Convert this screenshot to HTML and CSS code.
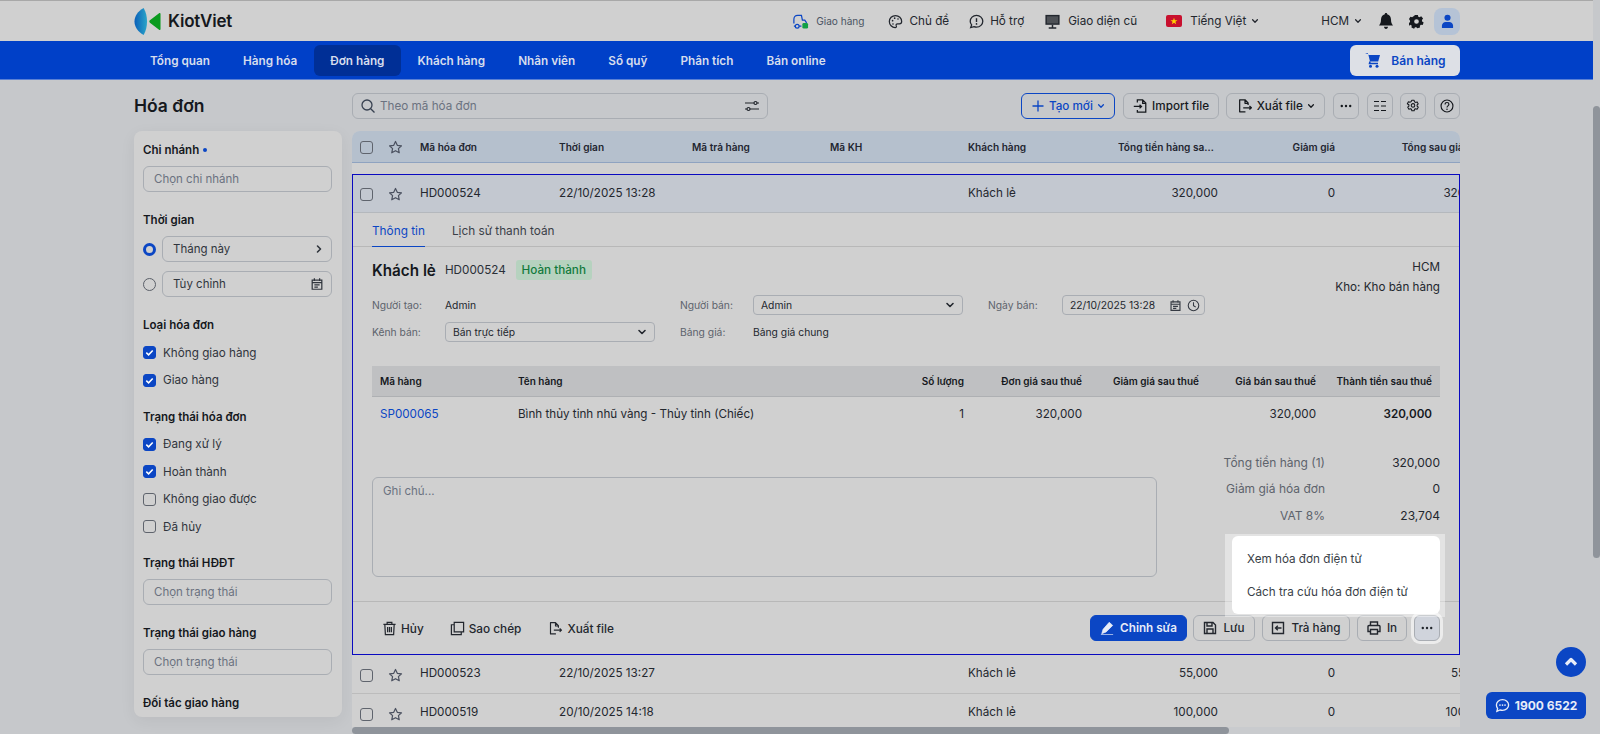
FILE: index.html
```html
<!DOCTYPE html>
<html lang="vi">
<head>
<meta charset="utf-8">
<title>KiotViet - Hóa đơn</title>
<link rel="stylesheet" href="styles.css">
</head>
<body>
<svg class="sprite" aria-hidden="true">
  <symbol id="star" viewBox="0 0 16 16"><path d="M8 1.600l1.900 4.100 4.500.5-3.300 3 .9 4.400L8 11.400l-4 2.200.9-4.400-3.300-3 4.500-.5z" fill="none" stroke="currentColor" stroke-width="1.300" stroke-linejoin="round"/></symbol>
  <symbol id="cal" viewBox="0 0 16 16"><path d="M2.500 3.500h11v10.500h-11zM2.500 6.500h11M5 1.500v3M11 1.500v3M5 9h6M5 11.500h4" fill="none" stroke="currentColor" stroke-width="1.400"/></symbol>
  <symbol id="chev" viewBox="0 0 10 10"><path d="M2 3.500l3 3 3-3" fill="none" stroke="currentColor" stroke-width="1.600" stroke-linecap="round" stroke-linejoin="round"/></symbol>
  <symbol id="export" viewBox="0 0 18 18"><path d="M9.500 15.500H3V2h6l3.500 3.500V8M9 2v4h3.500M7 11h9M14 9l2.200 2-2.200 2" fill="none" stroke="currentColor" stroke-width="1.400" stroke-linejoin="round"/></symbol>
  <symbol id="dots" viewBox="0 0 14 14"><circle cx="2.800" cy="7" r="1.200" fill="currentColor"/><circle cx="7" cy="7" r="1.200" fill="currentColor"/><circle cx="11.200" cy="7" r="1.200" fill="currentColor"/></symbol>
</svg>

<div class="app">
  <div class="page">
    <header class="topbar">
      <div class="brand">
        <svg class="logo" viewBox="0 0 27 28">
          <defs><linearGradient id="lg" x1="0" x2="1"><stop offset="0" stop-color="#0a5fb8"/><stop offset="1" stop-color="#2aa5c9"/></linearGradient></defs>
          <path d="M9.500 0C3.500 3.500 0 8.500 0 14s3.500 10.500 9.500 14C12 23.500 13 19 13 14S12 4.500 9.500 0z" fill="url(#lg)"/>
          <path d="M25.500 5.500c.7-.5 1.500 0 1.500.8v15.400c0 .8-.8 1.300-1.500.8L16 15.200c-.8-.6-.8-1.800 0-2.400z" fill="#0a9a1e"/>
        </svg>
        <span class="brand-name">KiotViet</span>
      </div>
      <div class="top-links">
        <a class="tl tl-ship">
          <svg class="i17" viewBox="0 0 18 18"><path d="M2 11V6.500C2 4 3.500 2.500 6 2.500h4l1 5h2.500l2 3M2 14h1.500M7.500 14H10" fill="none" stroke="#0b46c4" stroke-width="1.300"/><circle cx="5.500" cy="14" r="2" fill="none" stroke="#0b46c4" stroke-width="1.300"/><rect x="11" y="10.500" width="6" height="6" rx="1.500" fill="#11a044"/></svg>
          <span>Giao hàng</span>
        </a>
        <a class="tl tl-theme">
          <svg class="i15" viewBox="0 0 18 18"><path d="M9 1.800C4.800 1.800 1.600 5 1.600 9s3.200 7.200 7 7.200c1.400 0 1.800-1 1.300-2-.6-1.300.1-2.500 1.600-2.500h2.200c1.600 0 2.700-1 2.700-2.800 0-4-3.300-7.100-7.400-7.100z" fill="none" stroke="currentColor" stroke-width="1.500"/><circle cx="5.500" cy="8" r="1" fill="currentColor"/><circle cx="8" cy="5" r="1" fill="currentColor"/><circle cx="12" cy="6" r="1" fill="currentColor"/><circle cx="6" cy="12" r="1" fill="currentColor"/></svg>
          <span>Chủ đề</span>
        </a>
        <a class="tl tl-help">
          <svg class="i15" viewBox="0 0 16 16"><path d="M8 1.500c3.800 0 6.700 2.800 6.700 6.200S11.800 14 8 14c-1 0-1.900-.2-2.700-.5L1.800 14.500l1-2.900C1.900 10.600 1.300 9.200 1.300 7.700 1.300 4.300 4.200 1.500 8 1.500z" fill="none" stroke="currentColor" stroke-width="1.400"/><path d="M8 4.500v4" stroke="currentColor" stroke-width="1.500"/><circle cx="8" cy="10.600" r=".9" fill="currentColor"/></svg>
          <span>Hỗ trợ</span>
        </a>
        <a class="tl tl-old">
          <svg class="i17" viewBox="0 0 18 18"><path d="M1.500 2h15v10.500h-15z" fill="currentColor"/><path d="M9 12.500v3M5 16h8" stroke="currentColor" stroke-width="1.600"/><path d="M3 3.500h12v7.500H3z" fill="#d0d0d0" opacity=".25"/></svg>
          <span>Giao diện cũ</span>
        </a>
        <a class="tl tl-lang">
          <svg class="flag" viewBox="0 0 16 12"><rect width="16" height="12" rx="2" fill="#c8102e"/><path d="M8 2.700l.9 2.500h2.600L9.400 6.800l.8 2.500L8 7.800 5.800 9.300l.8-2.500-2.100-1.600h2.600z" fill="#ffd200"/></svg>
          <span>Tiếng Việt</span>
          <svg class="i8 lang-chev" viewBox="0 0 10 10"><use href="#chev"/></svg>
        </a>
        <a class="tl tl-branch">
          <span>HCM</span>
          <svg class="i8" viewBox="0 0 10 10"><use href="#chev"/></svg>
        </a>
        <svg class="bell" viewBox="0 0 16 18"><path d="M8 1c.8 0 1.200.5 1.200 1.200C11.500 2.800 13 4.800 13 7.500c0 3 .7 4.500 2 6H1c1.300-1.500 2-3 2-6 0-2.700 1.500-4.700 3.800-5.300C6.800 1.500 7.200 1 8 1zM6 14.800h4c0 1.200-.9 2.200-2 2.200s-2-1-2-2.200z" fill="#15181d"/></svg>
        <svg class="cog" viewBox="0 0 16 16"><path d="M6.500 1h3l.4 1.900 1.300.6L13 2.500l2 2.300-1.200 1.500.2 1.700 1.600 1-1 2.800-1.900-.3-1.100 1.100.1 1.900-2.900.6L7.900 14l-1.500 0-1 1.600-2.800-1.100.3-1.900-1.100-1.100L.4 12.500l-.9-2.800 1.600-1 0-1.500L0 5.300 1.500 2.800l1.800.6 1.200-.8zM8 5.500A2.500 2.500 0 1 0 8 10.500 2.500 2.500 0 0 0 8 5.500z" fill="#15181d" fill-rule="evenodd"/></svg>
        <span class="avatar"><svg viewBox="0 0 14 16"><circle cx="7" cy="4" r="3.300" fill="#0b46c4"/><path d="M1 15v-2.500C1 10 3 8.500 5 8.500h4c2 0 4 1.500 4 4V15z" fill="#0b46c4"/></svg></span>
      </div>
    </header>

    <nav class="mainnav">
      <a class="ni">Tổng quan</a>
      <a class="ni">Hàng hóa</a>
      <a class="ni ni-active">Đơn hàng</a>
      <a class="ni">Khách hàng</a>
      <a class="ni">Nhân viên</a>
      <a class="ni">Sổ quỹ</a>
      <a class="ni">Phân tích</a>
      <a class="ni">Bán online</a>
      <button class="sell">
        <svg class="i18" viewBox="0 0 18 18"><path d="M1 2h2.800l.5 2H16l-1.800 6.500H6L4.200 3" fill="#0b46c4"/><path d="M6 10.500l-.5 2H14" fill="none" stroke="#0b46c4" stroke-width="1.500"/><circle cx="6.500" cy="15.300" r="1.500" fill="#0b46c4"/><circle cx="13" cy="15.300" r="1.500" fill="#0b46c4"/></svg>
        Bán hàng
      </button>
    </nav>

    <div class="content">
      <aside class="left">
        <h1 class="title">Hóa đơn</h1>
        <div class="sidebar">
          <div class="side-inner">
            <h3 class="lab first">Chi nhánh <i class="dot"></i></h3>
            <div class="field ph">Chọn chi nhánh</div>

            <h3 class="lab">Thời gian</h3>
            <div class="radio-row">
              <span class="radio on"></span>
              <div class="field val"><span>Tháng này</span><svg class="i10 rot" viewBox="0 0 10 10"><use href="#chev"/></svg></div>
            </div>
            <div class="radio-row">
              <span class="radio"></span>
              <div class="field val"><span>Tùy chỉnh</span><svg class="i14" viewBox="0 0 16 16"><use href="#cal"/></svg></div>
            </div>

            <h3 class="lab">Loại hóa đơn</h3>
            <div class="checks">
              <label class="ck"><span class="box on"><svg viewBox="0 0 12 12"><path d="M2.500 6.200l2.500 2.300 4.500-4.700" fill="none" stroke="#fff" stroke-width="1.700"/></svg></span>Không giao hàng</label>
              <label class="ck"><span class="box on"><svg viewBox="0 0 12 12"><path d="M2.500 6.200l2.500 2.300 4.500-4.700" fill="none" stroke="#fff" stroke-width="1.700"/></svg></span>Giao hàng</label>
            </div>

            <h3 class="lab tight">Trạng thái hóa đơn</h3>
            <div class="checks">
              <label class="ck"><span class="box on"><svg viewBox="0 0 12 12"><path d="M2.500 6.200l2.500 2.300 4.500-4.700" fill="none" stroke="#fff" stroke-width="1.700"/></svg></span>Đang xử lý</label>
              <label class="ck"><span class="box on"><svg viewBox="0 0 12 12"><path d="M2.500 6.200l2.500 2.300 4.500-4.700" fill="none" stroke="#fff" stroke-width="1.700"/></svg></span>Hoàn thành</label>
              <label class="ck"><span class="box"></span>Không giao được</label>
              <label class="ck"><span class="box"></span>Đã hủy</label>
            </div>

            <h3 class="lab tight">Trạng thái HĐĐT</h3>
            <div class="field ph">Chọn trạng thái</div>

            <h3 class="lab">Trạng thái giao hàng</h3>
            <div class="field ph">Chọn trạng thái</div>

            <h3 class="lab">Đối tác giao hàng</h3>
          </div>
        </div>
      </aside>

      <main class="right">
        <div class="toolbar">
          <div class="search">
            <svg class="i16" viewBox="0 0 16 16"><circle cx="7" cy="7" r="5" fill="none" stroke="#374151" stroke-width="1.300"/><path d="M10.700 10.700L14.500 14.500" stroke="#374151" stroke-width="1.300"/></svg>
            <span class="search-ph">Theo mã hóa đơn</span>
            <svg class="i16 filter" viewBox="0 0 16 16"><path d="M1 5h9M13 5h2M1 11h2M6 11h9" stroke="#20242b" stroke-width="1.200"/><circle cx="11.500" cy="5" r="1.500" fill="none" stroke="#20242b" stroke-width="1.200"/><circle cx="4.500" cy="11" r="1.500" fill="none" stroke="#20242b" stroke-width="1.200"/></svg>
          </div>
          <div class="tools">
            <button class="btn btn-new"><svg class="i14" viewBox="0 0 14 14"><path d="M7 1.500v11M1.500 7h11" stroke="currentColor" stroke-width="1.300"/></svg>Tạo mới<svg class="i8" viewBox="0 0 10 10"><use href="#chev"/></svg></button>
            <button class="btn btn-imp"><svg class="i16" viewBox="0 0 18 18"><path d="M6 5V2h6l3.500 3.500V16H6v-2.500M12 2v4h3.500M2 9.500h8.500M8.500 7.500l2.200 2-2.200 2" fill="none" stroke="currentColor" stroke-width="1.400"/></svg>Import file</button>
            <button class="btn btn-exp"><svg class="i16" viewBox="0 0 18 18"><use href="#export"/></svg>Xuất file<svg class="i8" viewBox="0 0 10 10"><use href="#chev"/></svg></button>
            <button class="btn sq"><svg class="i14" viewBox="0 0 14 14"><use href="#dots"/></svg></button>
            <button class="btn sq"><svg class="i14" viewBox="0 0 14 14"><path d="M1 2.500h5M8 2.500h5M1 7h5M8 7h5M1 11.500h5M8 11.500h5" stroke="currentColor" stroke-width="1.200"/></svg></button>
            <button class="btn sq"><svg class="i14" viewBox="0 0 16 16"><path d="M6.700 1.500h2.600l.4 1.700 1.300.7 1.700-.6 1.300 2.300-1.300 1.200v1.400l1.300 1.200-1.300 2.300-1.700-.6-1.300.7-.4 1.700H6.700l-.4-1.700-1.300-.7-1.700.6-1.300-2.300 1.300-1.200V6.600L1.500 5.400l1.300-2.300 1.700.6 1.300-.7z" fill="none" stroke="currentColor" stroke-width="1.200" stroke-linejoin="round"/><circle cx="8" cy="7.300" r="2" fill="none" stroke="currentColor" stroke-width="1.200"/></svg></button>
            <button class="btn sq"><svg class="i14" viewBox="0 0 16 16"><circle cx="8" cy="8" r="6.800" fill="none" stroke="currentColor" stroke-width="1.300"/><path d="M5.800 6.200C5.800 4.900 6.800 4 8 4s2.200.9 2.200 2.100c0 1.700-2.200 1.800-2.200 3.500" fill="none" stroke="currentColor" stroke-width="1.300"/><circle cx="8" cy="11.700" r=".9" fill="currentColor"/></svg></button>
          </div>
        </div>

        <div class="table-wrap">
          <div class="thead grid-main">
            <div class="cell-ctl"><span class="box"></span><svg class="star" viewBox="0 0 16 16"><use href="#star"/></svg></div>
            <div>Mã hóa đơn</div><div>Thời gian</div><div>Mã trả hàng</div><div>Mã KH</div><div>Khách hàng</div>
            <div class="r ell">Tổng tiền hàng sau thuế</div><div class="r">Giảm giá</div><div class="r">Tổng sau giảm giá</div>
          </div>
          <div class="spacer"></div>

          <section class="open">
            <div class="row row-open grid-open">
              <div class="cell-ctl"><span class="box"></span><svg class="star" viewBox="0 0 16 16"><use href="#star"/></svg></div>
              <div>HD000524</div><div>22/10/2025 13:28</div><div></div><div></div><div>Khách lẻ</div>
              <div class="r">320,000</div><div class="r">0</div><div class="r">320,000</div>
            </div>
            <div class="tabs">
              <a class="tab tab-on">Thông tin</a>
              <a class="tab">Lịch sử thanh toán</a>
            </div>
            <div class="detail">
              <div class="info">
                <div class="info-main">
                  <div class="headline">
                    <strong class="cust">Khách lẻ</strong>
                    <span class="code">HD000524</span>
                    <span class="badge">Hoàn thành</span>
                  </div>
                  <div class="meta">
                    <span class="k">Người tạo:</span><span class="v">Admin</span>
                    <span class="k">Người bán:</span><div class="sel"><span>Admin</span><svg class="i10" viewBox="0 0 10 10"><use href="#chev"/></svg></div>
                    <span class="k">Ngày bán:</span>
                    <div class="sel date"><span>22/10/2025 13:28</span><span class="date-ic"><svg class="i13" viewBox="0 0 16 16"><use href="#cal"/></svg><svg class="i13" viewBox="0 0 16 16"><circle cx="8" cy="8" r="6.500" fill="none" stroke="currentColor" stroke-width="1.300"/><path d="M8 4v4.300l2.700 1.500" fill="none" stroke="currentColor" stroke-width="1.300"/></svg></span></div>
                    <span class="k">Kênh bán:</span><div class="sel"><span>Bán trực tiếp</span><svg class="i10" viewBox="0 0 10 10"><use href="#chev"/></svg></div>
                    <span class="k">Bảng giá:</span><span class="v">Bảng giá chung</span>
                  </div>
                </div>
                <div class="info-side">
                  <div>HCM</div>
                  <div>Kho: Kho bán hàng</div>
                </div>
              </div>

              <div class="pt-head grid-pt">
                <div>Mã hàng</div><div>Tên hàng</div><div class="r">Số lượng</div><div class="r">Đơn giá sau thuế</div><div class="r">Giảm giá sau thuế</div><div class="r">Giá bán sau thuế</div><div class="r">Thành tiền sau thuế</div>
              </div>
              <div class="pt-row grid-pt">
                <div class="link">SP000065</div><div class="pname">Bình thủy tinh nhũ vàng - Thủy tinh (Chiếc)</div><div class="r">1</div><div class="r">320,000</div><div class="r"></div><div class="r">320,000</div><div class="r total">320,000</div>
              </div>

              <div class="bottom">
                <div class="note">Ghi chú...</div>
                <div class="sums">
                  <span class="sk">Tổng tiền hàng (1)</span><span class="sv">320,000</span>
                  <span class="sk">Giảm giá hóa đơn</span><span class="sv">0</span>
                  <span class="sk">VAT 8%</span><span class="sv">23,704</span>
                </div>
              </div>
            </div>
            <div class="foot">
              <div class="foot-left">
                <a class="fa fa-del"><svg class="i16" viewBox="0 0 16 16"><path d="M1.500 3.500h13M5.500 3.500V1.500h5v2M3 3.500l.6 11h8.800l.6-11M6 6.500v5.500M8 6.500v5.500M10 6.500v5.500" fill="none" stroke="currentColor" stroke-width="1.300"/></svg>Hủy</a>
                <a class="fa fa-copy"><svg class="i16" viewBox="0 0 16 16"><path d="M4.500 1.500h10v10h-10zM4.500 4H1.500v10.500H12v-3" fill="none" stroke="currentColor" stroke-width="1.300"/></svg>Sao chép</a>
                <a class="fa fa-exp"><svg class="i16" viewBox="0 0 18 18"><use href="#export"/></svg>Xuất file</a>
              </div>
              <div class="foot-right">
                <button class="btn2 primary"><svg class="i14" viewBox="0 0 16 16"><path d="M10.500 1.500l4 3.500-7.500 7.500-5 2 1.500-5zM1 15.500h14" fill="#e8edf8" stroke="#e8edf8" stroke-width=".8"/></svg>Chỉnh sửa</button>
                <button class="btn2 b-save"><svg class="i14" viewBox="0 0 14 14"><path d="M1.500 1.500h8.500l2.500 2.500v8.500h-11zM4 1.500v3.500h5V1.500M4 12.500V8h6v4.500" fill="none" stroke="currentColor" stroke-width="1.400"/></svg>Lưu</button>
                <button class="btn2 b-ret"><svg class="i14" viewBox="0 0 14 14"><path d="M1.500 1.500h11v11h-11zM10.500 7H4.500M6.800 4.700L4.500 7l2.300 2.300" fill="none" stroke="currentColor" stroke-width="1.400"/></svg>Trả hàng</button>
                <button class="btn2 b-print"><svg class="i14" viewBox="0 0 14 14"><path d="M3.500 4.500V1h7v3.500M3.500 10.500H1V5.500c0-.6.400-1 1-1h10c.6 0 1 .4 1 1v5h-2.500M3.500 8.500h7V13h-7z" fill="none" stroke="currentColor" stroke-width="1.400"/></svg>In</button>
                <button class="btn2 b-more"><svg class="i14" viewBox="0 0 14 14"><use href="#dots"/></svg></button>
              </div>
            </div>
            <div class="menu-halo">
              <div class="menu">
                <a class="mi">Xem hóa đơn điện tử</a>
                <a class="mi">Cách tra cứu hóa đơn điện tử</a>
              </div>
            </div>
          </section>

          <div class="row grid-main">
            <div class="cell-ctl"><span class="box"></span><svg class="star" viewBox="0 0 16 16"><use href="#star"/></svg></div>
            <div>HD000523</div><div>22/10/2025 13:27</div><div></div><div></div><div>Khách lẻ</div>
            <div class="r">55,000</div><div class="r">0</div><div class="r">55,000</div>
          </div>
          <div class="row grid-main">
            <div class="cell-ctl"><span class="box"></span><svg class="star" viewBox="0 0 16 16"><use href="#star"/></svg></div>
            <div>HD000519</div><div>20/10/2025 14:18</div><div></div><div></div><div>Khách lẻ</div>
            <div class="r">100,000</div><div class="r">0</div><div class="r">100,000</div>
          </div>
        </div>
        <div class="hscroll"><div class="hthumb"></div></div>
      </main>
    </div>
  </div>
  <div class="vscroll"><div class="vthumb"></div></div>

  <button class="to-top"><svg viewBox="0 0 14 14"><path d="M2 9.500L7 4.500l5 5" fill="none" stroke="#e8edf8" stroke-width="3.200" stroke-linejoin="round"/></svg></button>
  <button class="hotline"><svg viewBox="0 0 16 16"><path d="M8 1.800c3.700 0 6.500 2.500 6.500 5.700S11.700 13.200 8 13.200c-.9 0-1.800-.2-2.600-.4L2 14.200l.8-3C2 10.200 1.500 8.900 1.500 7.500 1.500 4.300 4.300 1.800 8 1.800z" fill="none" stroke="#e8edf8" stroke-width="1.400"/><circle cx="5.300" cy="7.500" r=".9" fill="#e8edf8"/><circle cx="8" cy="7.500" r=".9" fill="#e8edf8"/><circle cx="10.700" cy="7.500" r=".9" fill="#e8edf8"/></svg>1900 6522</button>
</div>
</body>
</html>
```

FILE: styles.css
```css
* { box-sizing: border-box; }
html, body { margin: 0; padding: 0; height: 100%; overflow: hidden; }
body { font-family: Inter, "Noto Sans", sans-serif; font-size: 11.700px; color: #23272e; background: #c6c8cb; }
a { color: inherit; text-decoration: none; }
button { font-family: inherit; cursor: pointer; }
.sprite { display: none; }
svg { display: block; flex: none; }
.i8 { width: 8px; height: 8px; }
.i10 { width: 10px; height: 10px; }
.i13 { width: 13px; height: 13px; }
.i14 { width: 14px; height: 14px; }
.i15 { width: 15px; height: 15px; }
.i16 { width: 16px; height: 16px; }
.i17 { width: 17px; height: 17px; }
.i18 { width: 18px; height: 18px; }

.app { position: relative; display: flex; width: 1600px; height: 734px; overflow: hidden; }
.page { width: 1593px; height: 734px; display: flex; flex-direction: column; }
.vscroll { width: 7px; height: 734px; background: #c6c8cb; padding-top: 106px; }
.vthumb { height: 452px; background: #8f949b; border-radius: 4px; }

/* top bar */
.topbar { height: 41px; flex: none; border-top: 1px solid #a8a8a8; background: #d0d0d0; display: flex; align-items: center; padding: 0 133px 0 134px; }
.brand { display: flex; align-items: center; gap: 7px; }
.logo { width: 27px; height: 27px; }
.brand-name { font-size: 17px; font-weight: 600; color: #15181d; letter-spacing: -.2px; }
.top-links { margin-left: auto; display: flex; align-items: center; }
.tl { display: flex; align-items: center; font-size: 11.700px; color: #23272e; gap: 7px; }
.tl-ship { font-size: 10.100px; color: #4b5563; gap: 7px; }
.tl-theme { margin-left: 23px; }
.tl-help { margin-left: 20px; gap: 6px; }
.tl-old { margin-left: 20px; }
.tl-lang { margin-left: 29px; gap: 8px; }
.lang-chev { margin-left: -3px; }
.flag { width: 16px; height: 12px; }
.tl-branch { margin-left: 62px; gap: 5px; }
.bell { width: 16px; height: 18px; margin-left: 16px; }
.cog { width: 15px; height: 15px; margin-left: 15px; }
.avatar { width: 26px; height: 27px; margin-left: 10px; border-radius: 8px; background: #b5c3d6; display: flex; align-items: center; justify-content: center; }
.avatar svg { width: 13px; height: 15px; }

/* main nav */
.mainnav { height: 39px; flex: none; background: #0040c8; display: flex; align-items: center; padding: 0 133px 0 133.500px; border-bottom: 1px solid #5a80d4; }
.ni { height: 31px; padding: 1px 16.500px 0; display: flex; align-items: center; font-size: 11.750px; font-weight: 600; color: #d6dded; border-radius: 6px; }
.ni-active { background: #002f96; }
.sell { margin-left: auto; width: 110px; height: 31px; border: 0; border-radius: 6px; background: #dde0e6; color: #0b46c4; font-size: 12px; font-weight: 600; display: flex; align-items: center; justify-content: center; gap: 9px; }

/* layout */
.content { flex: 1; display: flex; gap: 10px; padding: 13px 133px 0 134px; min-height: 0; }
.left { width: 208px; flex: none; }
.right { width: 1108px; flex: none; display: flex; flex-direction: column; height: 641px; }
.title { margin: 0; height: 38px; font-size: 17.500px; line-height: 26px; font-weight: 600; color: #15181d; }

/* sidebar */
.sidebar { height: 586px; border-radius: 8px; background: #d0d0d0; box-shadow: 0 4px 16px rgba(0,0,0,.06); }
.side-inner { height: 580px; overflow: hidden; padding: 0 10px 0 9px; }
.lab { margin: 19px 0 0; padding-top: 1px; font-size: 11.500px; line-height: 16px; font-weight: 600; color: #15181d; display: flex; align-items: center; gap: 4px; }
.lab.first { margin-top: 10px; }
.lab.tight { margin-top: 13.500px; }
.dot { width: 4px; height: 4px; border-radius: 50%; background: #0b46c4; display: block; }
.field { height: 26px; margin-top: 8px; border: 1px solid #a9adb3; border-radius: 6px; padding: 0 10px; display: flex; align-items: center; font-size: 11.500px; }
.ph { color: #6b7280; }
.radio-row { display: flex; align-items: center; gap: 6px; margin-top: 8px; }
.radio-row + .radio-row { margin-top: 9px; }
.radio-row .field { margin-top: 0; flex: 1; justify-content: space-between; padding-right: 7px; color: #30353d; }
.radio { width: 13px; height: 13px; border-radius: 50%; border: 1px solid #5a5f68; flex: none; }
.radio.on { border: 3.500px solid #0b46c4; }
.rot { transform: rotate(-90deg); }
.checks { margin-top: 6px; }
.ck { height: 27.500px; display: flex; align-items: center; gap: 7px; font-size: 11.700px; color: #30353d; }
.box { width: 13px; height: 13px; border: 1px solid #5f646d; border-radius: 3px; flex: none; display: block; }
.box.on { background: #0b46c4; border-color: #0b46c4; }
.box svg { width: 11px; height: 11px; }

/* toolbar */
.toolbar { height: 26px; flex: none; display: flex; margin-bottom: 12px; }
.search { width: 416px; height: 26px; border: 1px solid #a9adb3; border-radius: 6px; display: flex; align-items: center; padding: 0 7px; gap: 4px; font-size: 11.700px; }
.search-ph { color: #6b7280; }
.filter { margin-left: auto; }
.tools { margin-left: auto; display: flex; gap: 7.700px; }
.btn { height: 26px; border: 1px solid #a9adb3; border-radius: 6px; background: transparent; color: #15181d; display: flex; align-items: center; justify-content: center; gap: 4px; font-size: 11.700px; font-weight: 500; padding: 0; }
.btn-new { width: 94px; border-color: #0b46c4; color: #0b46c4; }
.btn-imp { width: 96px; }
.btn-exp { width: 99px; }
.sq { width: 26px; }

/* table */
.table-wrap { flex: 1; min-height: 0; overflow: hidden; background: #d0d0d0; border-radius: 8px 8px 0 0; }
.grid-main { display: grid; grid-template-columns: 68px 139px 133px 138px 138px 150px 100px 117px 155px; align-items: center; width: 1138px; }
.grid-open { display: grid; grid-template-columns: 67px 139px 133px 138px 138px 150px 100px 117px 155px; align-items: center; width: 1137px; }
.thead { height: 32px; background: #b5c0cd; border-bottom: 1px solid #8fa3c0; font-size: 10.100px; font-weight: 600; color: #1f2530; padding-top: 1px; }
.thead .ell { white-space: nowrap; overflow: hidden; text-overflow: ellipsis; padding-right: 4px; }
.thead .r:last-child { white-space: nowrap; }
.spacer { height: 11px; }
.r { text-align: right; }
.cell-ctl { display: flex; align-items: center; gap: 15px; padding-left: 8px; }
.star { width: 15px; height: 15px; color: #4b5160; }
.row { height: 39px; padding-bottom: 2px; border-bottom: 1px solid #bcbcbc; font-size: 11.700px; color: #23272e; }
.row .cell-ctl { padding-top: 4px; }
.thead .cell-ctl { padding-top: 0; }
.open { position: relative; height: 481px; border: 1px solid #0a0ac0; overflow: hidden; }
.row-open { height: 38px; background: #c3c8d0; border-bottom: 1px solid #b4b8bd; }
.row-open .cell-ctl { padding-left: 7px; }
.tabs { height: 34px; display: flex; gap: 27px; padding: 0 19px; border-bottom: 1px solid #b8b8b8; }
.tab { height: 33px; line-height: 37px; font-size: 11.800px; color: #3a3f48; }
.tab-on { color: #0b46c4; border-bottom: 1px solid #0b46c4; height: 34px; }
.detail { padding: 11px 19px 0; }
.info { display: flex; justify-content: space-between; }
.info-main { padding-top: 2px; }
.info-side { text-align: right; font-size: 11.650px; line-height: 19.500px; color: #23272e; }
.headline { height: 20px; display: flex; align-items: center; }
.cust { font-size: 15.250px; font-weight: 600; color: #15181d; }
.code { margin-left: 9px; font-size: 11.700px; color: #2a2f37; }
.badge { margin-left: 10px; height: 20px; width: 76px; border-radius: 3px; background: #b6d2bf; color: #127a3c; font-size: 11.700px; font-weight: 500; display: flex; align-items: center; justify-content: center; }
.meta { display: grid; grid-template-columns: 73px 235px 73px 235px 74px 143px; grid-auto-rows: 20px; row-gap: 7px; margin-top: 15px; align-items: center; font-size: 10.300px; }
.k { color: #5d636c; }
.v { color: #23272e; }
.sel { height: 20px; width: 210px; border: 1px solid #a9adb3; border-radius: 4px; padding: 0 7px; display: flex; align-items: center; justify-content: space-between; color: #23272e; }
.sel.date { width: 143px; padding-right: 4px; }
.date-ic { display: flex; gap: 5px; color: #353a43; }
.grid-pt { display: grid; grid-template-columns: 138px 338px 124px 118px 117px 117px 1fr; align-items: center; }
.grid-pt > div { padding-left: 8px; }
.grid-pt > .pname { padding-left: 8px; }
.grid-pt > .r { padding: 0 8px 0 0; }
.pt-head { margin-top: 24px; height: 31px; background: #bfc0c2; border-bottom: 1px solid #aeb0b3; font-size: 10px; font-weight: 600; color: #15181d; white-space: nowrap; }
.pt-row { height: 34px; font-size: 11.650px; color: #23272e; }
.link { color: #0b46c4; }
.total { font-weight: 600; color: #15181d; }
.bottom { display: flex; margin-top: 19px; }
.note { width: 785px; height: 100px; margin-top: 27px; border: 1px solid #a9adb3; border-radius: 6px; padding: 6px 10px; font-size: 11.500px; line-height: 14px; color: #6b7280; }
.sums { flex: 1; display: grid; grid-template-columns: 1fr 115px; grid-auto-rows: 26.500px; align-items: center; font-size: 12px; align-self: start; margin-top: -1px; }
.sk { text-align: right; color: #5d636c; }
.sv { text-align: right; color: #23272e; }
.foot { height: 54px; margin-top: 24px; border-top: 1px solid #b8b8b8; padding: 13px 19px 0 29px; display: flex; justify-content: space-between; }
.foot-left { display: flex; height: 27px; align-items: center; font-size: 11.800px; font-weight: 500; color: #23272e; }
.fa { display: flex; align-items: center; gap: 4px; }
.fa svg { width: 15px; height: 15px; }
.fa-copy { margin-left: 26px; }
.fa-exp { margin-left: 27px; }
.foot-right { display: flex; gap: 7px; }
.btn2 { height: 26px; border: 1px solid #a9adb3; border-radius: 6px; background: transparent; color: #23272e; font-size: 11.700px; font-weight: 500; display: flex; align-items: center; justify-content: center; gap: 6px; padding: 0; }
.primary { width: 97px; background: #0b46c4; border-color: #0b46c4; color: #e8edf8; font-weight: 600; }
.b-save { width: 62px; margin-left: -1px; }
.b-ret { width: 88px; }
.b-print { width: 50px; }
.b-more { width: 26px; background: #d0d4dc; border-color: #a9adb3; box-shadow: 0 0 0 3px #ececec; position: relative; }
.menu-halo { position: absolute; left: 872px; top: 359px; width: 220px; height: 83px; padding: 2px 5px 3px 7px; background: rgba(255,255,255,.4); }
.menu { height: 78px; padding: 6px 0; background: #fff; border-radius: 6px; }
.mi { display: flex; align-items: center; height: 33px; padding-left: 15px; font-size: 11.700px; color: #3a3f48; }

.hscroll { height: 7px; flex: none; background: #c9cbce; }
.hthumb { width: 877px; height: 7px; background: #8f949b; border-radius: 4px; }

/* floating */
.to-top { position: absolute; left: 1556px; top: 647px; width: 30px; height: 30px; padding: 0; border: 0; border-radius: 50%; background: #0b46c4; display: flex; align-items: center; justify-content: center; }
.to-top svg { width: 14px; height: 14px; }
.hotline { position: absolute; left: 1486px; top: 692px; width: 100px; height: 27px; padding: 0; border: 0; border-radius: 6px; background: #0b46c4; color: #e8edf8; font-size: 12px; font-weight: 700; display: flex; align-items: center; justify-content: center; gap: 5px; }
.hotline svg { width: 15px; height: 15px; }
```
